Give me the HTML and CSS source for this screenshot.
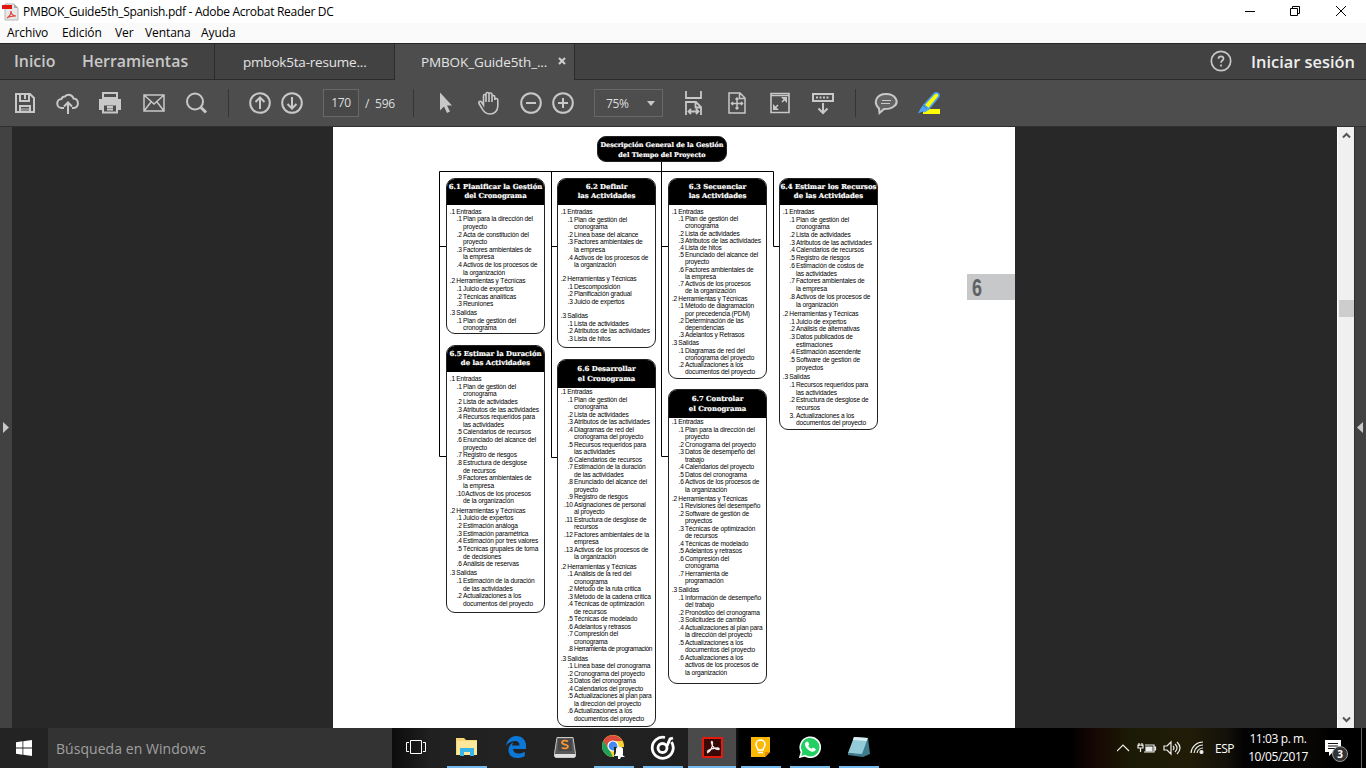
FILE: index.html
```html
<!DOCTYPE html>
<html lang="es">
<head>
<meta charset="utf-8">
<title>PMBOK_Guide5th_Spanish.pdf - Adobe Acrobat Reader DC</title>
<link rel="stylesheet" href="styles.css">
</head>
<body>
<div class="window">
<header class="titlebar">
  <svg class="appicon" width="17" height="18" viewBox="0 0 17 18"><path d="M3 1h9l4 4v12H3z" fill="#e8e8e8" stroke="#b5b5b5"/><path d="M12 1v4h4z" fill="#aaa"/><path d="M0 2h10v4H0z" fill="#e2180e"/><path d="M5 15c3-2 4-4 4-7 0 3 2 5 5 5-4 0-6 0-9 2z" fill="none" stroke="#e0443b" stroke-width="1.200"/></svg>
  <span class="wtitle">PMBOK_Guide5th_Spanish.pdf - Adobe Acrobat Reader DC</span>
  <svg class="wctl" width="110" height="22" viewBox="0 0 110 22" fill="none" stroke="#000"><path d="M0 10.500h10M45.500 7.500h7v7h-7zM47.500 7.500v-2h7v7h-2M91 5l10 10M101 5l-10 10"/></svg>
</header>
<nav class="menubar"><span class="m1">Archivo</span><span class="m2">Edición</span><span class="m3">Ver</span><span class="m4">Ventana</span><span class="m5">Ayuda</span></nav>
<div class="tabs">
  <div class="home"><span class="inicio">Inicio</span><span class="herr">Herramientas</span></div>
  <div class="tab t1"><span>pmbok5ta-resume...</span></div>
  <div class="tab t2"><span>PMBOK_Guide5th_...</span><svg width="8" height="8" viewBox="0 0 8 8" stroke="#d0d0d0" stroke-width="2"><path d="M1 1l6 6M7 1l-6 6"/></svg></div>
  <div class="account"><svg width="22" height="22" viewBox="0 0 22 22" fill="none" stroke="#c8c8c8" stroke-width="1.700"><circle cx="11" cy="11" r="9.700"/><path d="M8.500 8.800c0-3.200 5-3.200 5 0 0 1.700-2.500 1.800-2.500 4M11 14.500v2"/></svg><span>Iniciar sesión</span></div>
</div>
<div class="toolbar">
  <svg class="ic g13" viewBox="0 0 24 24"><path d="M3 3h14l4 4v14H3zM7 3v7h9V3M7 21v-6h10v6"/><path d="M12 4v4" /><path d="M8 17h8v3H8z" fill="#888" stroke="none"/></svg>
  <svg class="ic g19" viewBox="0 0 24 24"><path d="M8 17H6a4.500 4.500 0 0 1-.5-9A3.500 3.500 0 0 1 9 5.500a5 5 0 0 1 8.500 2A4.800 4.800 0 0 1 18 17h-2M12 23V12M8 15.500l4-4 4 4"/></svg>
  <svg class="ic g18" viewBox="0 0 24 24"><path d="M5 2h14v5H5z"/><path d="M1 8h22v11h-3v-5H4v5H1z" fill="#c8c8c8" stroke="none"/><path d="M5 13.500h14v8H5zM9 16h6M9 18.500h6"/></svg>
  <svg class="ic g20" viewBox="0 0 24 24"><path d="M2 4h20v16H2zM2 4l10 9L22 4M2 20l7-9M22 20l-7-9" stroke-width="1.500"/></svg>
  <svg class="ic g18" viewBox="0 0 24 24"><circle cx="11" cy="10.500" r="8"/><path d="M17 16.500l5 5" stroke-width="3"/></svg>
  <i class="sep g20"></i>
  <svg class="ic g19" viewBox="0 0 24 24"><circle cx="12" cy="12" r="9.800"/><path d="M12 18V7M7.500 11L12 6.500l4.500 4.500"/></svg>
  <svg class="ic g8" viewBox="0 0 24 24"><circle cx="12" cy="12" r="9.800"/><path d="M12 6v11M7.500 13l4.500 4.500 4.500-4.500"/></svg>
  <span class="pagebox g19">170</span><span class="total">/&nbsp; 596</span>
  <i class="sep"></i>
  <svg class="ic g20" viewBox="0 0 24 24"><path d="M6 1.500v18l4-4 3 6.500 3-1.500-3-6h5z" fill="#c8c8c8" stroke="none"/></svg>
  <svg class="ic g18" viewBox="0 0 24 24"><path d="M7.500 14V5c0-2 2.500-2 2.500 0v6V3c0-2 3-2 3 0v8V3.500c0-2 3-2 3 0V11 6c0-2 2.800-2 2.800 0v3c0-2 3-2 3 0v6c0 5-3.500 8-7.800 8-4.500 0-6.500-2.500-8-5.500l-3-5c-1-2 1.500-3 2.500-1.500z" stroke-width="1.600"/></svg>
  <svg class="ic g19" viewBox="0 0 24 24"><circle cx="12" cy="12" r="9.800"/><path d="M7 12h10"/></svg>
  <svg class="ic g8" viewBox="0 0 24 24"><circle cx="12" cy="12" r="9.800"/><path d="M7 12h10M12 7v10"/></svg>
  <span class="zoombox g19"><b>75%</b><svg width="8" height="5" viewBox="0 0 8 5"><path d="M0 0h8L4 5z" fill="#c8c8c8"/></svg></span>
  <svg class="ic g18" viewBox="0 0 24 24"><path d="M5 0v7h15V0M5 24V11h10l5 5v8M14.500 11v5.500H20M8 20.500h9M10 18l-2.500 2.500L10 23M15 18l2.500 2.500L15 23" stroke-width="1.800"/></svg>
  <svg class="ic g20" viewBox="0 0 24 24"><path d="M4 2h11l5 5v15H4zM14.500 2v5.500H20M12 7v11M6.500 12.500h11M10.500 8.500L12 7l1.500 1.500M10.500 16.500L12 18l1.500-1.500M8 11l-1.500 1.500L8 14M16 11l1.500 1.500L16 14" stroke-width="1.500"/></svg>
  <svg class="ic g19" viewBox="0 0 24 24"><path d="M3 2.500h18v19H3z" stroke-width="1.600"/><path d="M3 4.500h18M14 11l4-4M6 18l4-4" stroke-width="1.600"/><path d="M13 6h6v6zM5 13v6h6z" fill="#c8c8c8" stroke="none"/></svg>
  <svg class="ic g19" viewBox="0 0 24 24"><path d="M2 3h20v7H2zM12 12v10M7.500 17.500L12 22l4.500-4.500"/><path d="M5 6.500h14" stroke-dasharray="2 1.500"/></svg>
  <i class="sep g20"></i>
  <svg class="ic g18" viewBox="0 0 24 24"><path d="M5 17.500C-1 12 2 3 12 3s14 9 7 13c-3 2-6 2-9 2l-4.500 4z" fill="#646464"/><path d="M8 9.500h9M7 12.500h9" stroke-width="1.200"/></svg>
  <svg class="ic g18" viewBox="0 0 24 24"><path d="M7 18h17v5H7z" fill="#ff0" stroke="none"/><path d="M8 14L18 3c2-2 5-1 5 1 0 1-.5 2-1 2.500L12.500 18z" fill="#ff0" stroke="#4ba3f2" stroke-width="1.800"/><path d="M6.500 14.500l6 4.500-4 2.500-2-1-4.500 2 2-4z" fill="#4ba3f2" stroke="none"/></svg>
</div>
<main class="viewer">
  <aside class="rail left"><svg width="6" height="11" viewBox="0 0 6 11"><path d="M0 0l6 5.500L0 11z" fill="#c8c8c8"/></svg></aside>
  <section class="desk"><div class="page">
    <svg class="wires" width="682" height="601" viewBox="0 0 682 601" fill="none" stroke="#000"><path d="M328.500 34v295.500H336M106.500 329.500h8M106.500 329.500V44.500h334v75h6M106.500 119.500h8M218.500 44v286.500h7M218.500 119.500h7M328.500 119.500h8"/></svg>
    <h1 class="node root">Descripción General de la Gestión<br>del Tiempo del Proyecto</h1>

    <article class="node n1"><h2>6.1 Planificar la Gestión<br>del Cronograma</h2>
      <h3><b>.1</b>Entradas</h3>
      <p><b>.1</b>Plan para la dirección del<br>proyecto</p><p><b>.2</b>Acta de constitución del<br>proyecto</p><p><b>.3</b>Factores ambientales de<br>la empresa</p><p><b>.4</b>Activos de los procesos de<br>la organización</p>
      <h3><b>.2</b>Herramientas y Técnicas</h3>
      <p><b>.1</b>Juicio de expertos</p><p><b>.2</b>Técnicas analíticas</p><p><b>.3</b>Reuniones</p>
      <h3><b>.3</b>Salidas</h3>
      <p><b>.1</b>Plan de gestión del<br>cronograma</p></article>

    <article class="node n2"><h2>6.2 Definir<br>las Actividades</h2>
      <h3><b>.1</b>Entradas</h3>
      <p><b>.1</b>Plan de gestión del<br>cronograma</p><p><b>.2</b>Línea base del alcance</p><p><b>.3</b>Factores ambientales de<br>la empresa</p><p><b>.4</b>Activos de los procesos de<br>la organización</p>
      <h3><b>.2</b>Herramientas y Técnicas</h3>
      <p><b>.1</b>Descomposición</p><p><b>.2</b>Planificación gradual</p><p><b>.3</b>Juicio de expertos</p>
      <h3><b>.3</b>Salidas</h3>
      <p><b>.1</b>Lista de actividades</p><p><b>.2</b>Atributos de las actividades</p><p><b>.3</b>Lista de hitos</p></article>

    <article class="node n3"><h2>6.3 Secuenciar<br>las Actividades</h2>
      <h3><b>.1</b>Entradas</h3>
      <p><b>.1</b>Plan de gestión del<br>cronograma</p><p><b>.2</b>Lista de actividades</p><p><b>.3</b>Atributos de las actividades</p><p><b>.4</b>Lista de hitos</p><p><b>.5</b>Enunciado del alcance del<br>proyecto</p><p><b>.6</b>Factores ambientales de<br>la empresa</p><p><b>.7</b>Activos de los procesos<br>de la organización</p>
      <h3><b>.2</b>Herramientas y Técnicas</h3>
      <p><b>.1</b>Método de diagramación<br>por precedencia (PDM)</p><p><b>.2</b>Determinación de las<br>dependencias</p><p><b>.3</b>Adelantos y Retrasos</p>
      <h3><b>.3</b>Salidas</h3>
      <p><b>.1</b>Diagramas de red del<br>cronograma del proyecto</p><p><b>.2</b>Actualizaciones a los<br>documentos del proyecto</p></article>

    <article class="node n4"><h2>6.4 Estimar los Recursos<br>de las Actividades</h2>
      <h3><b>.1</b>Entradas</h3>
      <p><b>.1</b>Plan de gestión del<br>cronograma</p><p><b>.2</b>Lista de actividades</p><p><b>.3</b>Atributos de las actividades</p><p><b>.4</b>Calendarios de recursos</p><p><b>.5</b>Registro de riesgos</p><p><b>.6</b>Estimación de costos de<br>las actividades</p><p><b>.7</b>Factores ambientales de<br>la empresa</p><p><b>.8</b>Activos de los procesos de<br>la organización</p>
      <h3><b>.2</b>Herramientas y Técnicas</h3>
      <p><b>.1</b>Juicio de expertos</p><p><b>.2</b>Análisis de alternativas</p><p><b>.3</b>Datos publicados de<br>estimaciones</p><p><b>.4</b>Estimación ascendente</p><p><b>.5</b>Software de gestión de<br>proyectos</p>
      <h3><b>.3</b>Salidas</h3>
      <p><b>.1</b>Recursos requeridos para<br>las actividades</p><p><b>.2</b>Estructura de desglose de<br>recursos</p><p><b>3.</b>Actualizaciones a los<br>documentos del proyecto</p></article>

    <article class="node n5"><h2>6.5 Estimar la Duración<br>de las Actividades</h2>
      <h3><b>.1</b>Entradas</h3>
      <p><b>.1</b>Plan de gestión del<br>cronograma</p><p><b>.2</b>Lista de actividades</p><p><b>.3</b>Atributos de las actividades</p><p><b>.4</b>Recursos requeridos para<br>las actividades</p><p><b>.5</b>Calendarios de recursos</p><p><b>.6</b>Enunciado del alcance del<br>proyecto</p><p><b>.7</b>Registro de riesgos</p><p><b>.8</b>Estructura de desglose<br>de recursos</p><p><b>.9</b>Factores ambientales de<br>la empresa</p><p><b class="wide">.10</b>Activos de los procesos<br>de la organización</p>
      <h3><b>.2</b>Herramientas y Técnicas</h3>
      <p><b>.1</b>Juicio de expertos</p><p><b>.2</b>Estimación análoga</p><p><b>.3</b>Estimación paramétrica</p><p><b>.4</b>Estimación por tres valores</p><p><b>.5</b>Técnicas grupales de toma<br>de decisiones</p><p><b>.6</b>Análisis de reservas</p>
      <h3><b>.3</b>Salidas</h3>
      <p><b>.1</b>Estimación de la duración<br>de las actividades</p><p><b>.2</b>Actualizaciones a los<br>documentos del proyecto</p></article>

    <article class="node n6"><h2>6.6 Desarrollar<br>el Cronograma</h2>
      <h3><b>.1</b>Entradas</h3>
      <p><b>.1</b>Plan de gestión del<br>cronograma</p><p><b>.2</b>Lista de actividades</p><p><b>.3</b>Atributos de las actividades</p><p><b>.4</b>Diagramas de red del<br>cronograma del proyecto</p><p><b>.5</b>Recursos requeridos para<br>las actividades</p><p><b>.6</b>Calendarios de recursos</p><p><b>.7</b>Estimación de la duración<br>de las actividades</p><p><b>.8</b>Enunciado del alcance del<br>proyecto</p><p><b>.9</b>Registro de riesgos</p><p><b>.10</b>Asignaciones de personal<br>al proyecto</p><p><b>.11</b>Estructura de desglose de<br>recursos</p><p><b>.12</b>Factores ambientales de la<br>empresa</p><p><b>.13</b>Activos de los procesos de<br>la organización</p>
      <h3><b>.2</b>Herramientas y Técnicas</h3>
      <p><b>.1</b>Análisis de la red del<br>cronograma</p><p><b>.2</b>Método de la ruta crítica</p><p><b>.3</b>Método de la cadena crítica</p><p><b>.4</b>Técnicas de optimización<br>de recursos</p><p><b>.5</b>Técnicas de modelado</p><p><b>.6</b>Adelantos y retrasos</p><p><b>.7</b>Compresión del<br>cronograma</p><p class="tight"><b>.8</b>Herramienta de programación</p>
      <h3><b>.3</b>Salidas</h3>
      <p><b>.1</b>Línea base del cronograma</p><p><b>.2</b>Cronograma del proyecto</p><p><b>.3</b>Datos del cronograma</p><p><b>.4</b>Calendarios del proyecto</p><p><b>.5</b>Actualizaciones al plan para<br>la dirección del proyecto</p><p><b>.6</b>Actualizaciones a los<br>documentos del proyecto</p></article>

    <article class="node n7"><h2>6.7 Controlar<br>el Cronograma</h2>
      <h3><b>.1</b>Entradas</h3>
      <p><b>.1</b>Plan para la dirección del<br>proyecto</p><p><b>.2</b>Cronograma del proyecto</p><p><b>.3</b>Datos de desempeño del<br>trabajo</p><p><b>.4</b>Calendarios del proyecto</p><p><b>.5</b>Datos del cronograma</p><p><b>.6</b>Activos de los procesos de<br>la organización</p>
      <h3><b>.2</b>Herramientas y Técnicas</h3>
      <p><b>.1</b>Revisiones del desempeño</p><p><b>.2</b>Software de gestión de<br>proyectos</p><p><b>.3</b>Técnicas de optimización<br>de recursos</p><p><b>.4</b>Técnicas de modelado</p><p><b>.5</b>Adelantos y retrasos</p><p><b>.6</b>Compresión del<br>cronograma</p><p><b>.7</b>Herramienta de<br>programación</p>
      <h3><b>.3</b>Salidas</h3>
      <p><b>.1</b>Información de desempeño<br>del trabajo</p><p><b>.2</b>Pronóstico del cronograma</p><p><b>.3</b>Solicitudes de cambio</p><p><b>.4</b>Actualizaciones al plan para<br>la dirección del proyecto</p><p><b>.5</b>Actualizaciones a los<br>documentos del proyecto</p><p><b>.6</b>Actualizaciones a los<br>activos de los procesos de<br>la organización</p></article>
    <div class="chapter"><span>6</span></div>
  </div></section>
  <div class="scroll"><svg width="9" height="7" viewBox="0 0 9 7"><path d="M1 5.500L4.500 2 8 5.500" fill="none" stroke="#555" stroke-width="2"/></svg><i class="thumb"></i><svg class="down" width="9" height="7" viewBox="0 0 9 7"><path d="M1 1.500L4.500 5 8 1.500" fill="none" stroke="#555" stroke-width="2"/></svg></div>
  <aside class="rail right"><svg width="6" height="11" viewBox="0 0 6 11"><path d="M6 0L0 5.500 6 11z" fill="#c8c8c8"/></svg></aside>
</main>
</div>
<footer class="taskbar">
  <div class="start"><svg width="16" height="16" viewBox="0 0 16 16" fill="#fff"><path d="M0 2.300l6.500-1V7.600H0zM7.300 1.200L16 0v7.600H7.300zM0 8.400h6.500v6.300L0 13.800zM7.300 8.400H16V16l-8.700-1.200z"/></svg></div>
  <div class="search"><span>Búsqueda en Windows</span></div>
  <div class="slot tv"><svg width="20" height="14" viewBox="0 0 20 14" fill="none" stroke="#fff"><path d="M4.500.5h11v13h-11zM3 2.500H.5v9H3M17 2.500h2.500v9H17"/></svg></div>
  <div class="slot run stack"><svg width="22" height="20" viewBox="0 0 22 20"><path d="M0 1h8l2 2h11v15H0z" fill="#f7d674"/><path d="M1 4h20v14H1z" fill="#fde79d"/><path d="M4 19v-8h14v8h-4v-4H8v4z" fill="#38b4e8"/></svg></div>
  <div class="slot"><svg width="20" height="22" viewBox="0 0 20 22"><path d="M0 10C1 4 5 0 10.500 0 16 0 20 4 20 9.500V13H7c.3 3 2.500 4.500 5.500 4.500 2.300 0 4.500-.6 6.300-1.800v4.200C16.500 21.300 14 22 11 22c-5 0-8.500-3-8.500-8 0-3.500 2-6.500 5-7.500-.8.800-1.300 2-1.400 3h7.400c0-3-1.500-4.500-4.200-4.500C5.500 5 2 7 0 10z" fill="#0b78d7"/></svg></div>
  <div class="slot"><svg width="22" height="21" viewBox="0 0 22 21"><path d="M3 .5h16l2.500 16v3l-1 1h-19l-1-1v-3z" fill="#5a5a5a" stroke="#c9c9c9"/><path d="M4 2h14v12H4z" fill="#484848"/><path d="M1 17h20v3H1z" fill="#e0e0e0"/><path d="M14 4.500C12 3 8 3.200 8 5.500c0 2.600 6 1.500 6 4 0 2-3.500 2.500-6.300 1.200" fill="none" stroke="#f79533" stroke-width="1.800"/></svg></div>
  <div class="slot run"><svg width="24" height="26" viewBox="0 0 24 26"><circle cx="11" cy="12" r="11" fill="#f9d334"/><path d="M1.500 6.500L7 15l4 8A11 11 0 0 1 1.500 6.500z" fill="#1fa05b"/><path d="M20.500 7A11 11 0 0 0 1.500 6.500L6 14l5-7z" fill="#dd4b3e"/><circle cx="11" cy="12" r="5" fill="#4688f1" stroke="#fff" stroke-width="1.200"/><path d="M12 13h11v12H12z" fill="#1c2628"/><path d="M14 15c0-3 7-3 7 0v4c0 2-1 2 2 4H19l-1 2h-2v-3h-4c2-2 2-3 2-7z" fill="#fff"/></svg></div>
  <div class="slot run"><svg width="25" height="25" viewBox="0 0 25 25" fill="none" stroke="#fff" stroke-width="2.800"><path d="M15 2.500A10.500 10.500 0 1 0 21.500 7"/><circle cx="12.500" cy="13" r="4.500"/><path d="M17 11l3-7 3-1"/></svg></div>
  <div class="slot run active"><svg width="21" height="21" viewBox="0 0 21 21"><path d="M1 1h19v19H1z" fill="#3a0805" stroke="#e31b0c" stroke-width="2"/><path d="M5 16c3-1 6-6 5.500-10 0-2-1.500-2-1 0 .5 4 4 6.500 7 6.500 1 0 1-1.500-1-1.500-4 0-8 1.500-10.500 3.500" fill="none" stroke="#eee" stroke-width="1.300"/></svg></div>
  <div class="slot run"><svg width="19" height="20" viewBox="0 0 19 20"><path d="M0 0h19v15l-5 5H0z" fill="#fbb904"/><path d="M14 20v-5h5z" fill="#e58b00"/><path d="M7 13c0-2-2-3-2-5.500a4.500 4.500 0 0 1 9 0C14 10 12 11 12 13zM7 15.500h5" fill="none" stroke="#fff" stroke-width="1.500"/></svg></div>
  <div class="slot run"><svg width="22" height="22" viewBox="0 0 22 22"><path d="M1 21l1.500-5A10 10 0 1 1 6 19.700z" fill="#22cf62" stroke="#fff" stroke-width="1.600"/><path d="M7 6l2-.5 1.200 3-1 1.300c.8 1.500 2 2.500 3.500 3l1.200-1.300 2.800 1.500c.2 2-2 3.200-4 2.700C9 14.500 6.500 11.500 6 9c-.2-1 .2-2.300 1-3z" fill="#fff"/></svg></div>
  <div class="slot run"><svg width="23" height="20" viewBox="0 0 23 20"><path d="M7 0l14 1-5 17-15-2z" fill="#93cbd9"/><path d="M7 0l14 1-1 3L6 3z" fill="#d9eef3"/><path d="M21 1l2 16-7 3-15-2v-2l14 1z" fill="#3f7b8d"/></svg></div>
  <div class="tray">
    <svg width="90" height="16" viewBox="0 0 90 16" fill="none" stroke="#eee" stroke-width="1.200"><path d="M0 11l6-6 6 6"/><path d="M28 5h9v7h-10M37 7h1.500v3H37M22 3v3M25 3v3M21 5h5v3h-5zM23.500 8v4"/><path d="M29 7h6v4h-6z" fill="#eee"/><path d="M47 6h3l4-4v12l-4-4h-3zM56 6q2 2 0 4M58 4q4 4 0 8M60 2q6 6 0 12"/><path d="M74 13A12 12 0 0 1 86 2M77 13a9 9 0 0 1 9-8M80 13a6 6 0 0 1 6-5"/><circle cx="84.500" cy="12" r="1.500" fill="#eee"/></svg>
    <span class="lang">ESP</span>
    <div class="clock"><span class="time">11:03 p. m.</span><span class="date">10/05/2017</span></div>
    <div class="notif"><svg width="16" height="17" viewBox="0 0 16 17"><path d="M0 0h16v12H8l-4 4v-4H0z" fill="#fff"/><path d="M3 3.500h10M3 6h10M3 8.500h7" stroke="#111"/></svg><span class="badge">3</span></div>
    <i class="edge"></i>
  </div>
</footer>
</body>
</html>
```
FILE: styles.css
```css
* { box-sizing: border-box; }
body { margin: 0; width: 1366px; height: 768px; overflow: hidden; display: flex; flex-direction: column; font-family: "Open Sans", "Noto Sans", sans-serif; font-size: 12px; }
svg { display: block; flex: none; }
span { white-space: nowrap; }
.window { height: 728px; display: flex; flex-direction: column; }

.titlebar { height: 23px; background: #fff; display: flex; align-items: center; padding-left: 2px; }
.wtitle { margin-left: 4px; font-size: 12px; letter-spacing: -.3px; }
.wctl { margin-left: auto; margin-right: 11px; }
.menubar { height: 20px; background: #fafafa; display: flex; align-items: center; padding: 0 0 1px 7px; letter-spacing: -.1px; }
.m1 { width: 55px; } .m2 { width: 53px; } .m3 { width: 30px; } .m4 { width: 56px; }

.tabs { height: 37px; background: #424242; border-top: 1px solid #252525; border-bottom: 1px solid #2b2b2b; display: flex; }
.home { width: 215px; border-right: 1px solid #2b2b2b; display: flex; align-items: center; padding: 0 0 1px 14px; font-size: 15.900px; font-weight: 600; color: #c8c8c8; }
.inicio { width: 68px; }
.tab { width: 180px; display: flex; align-items: center; color: #e4e4e4; font-size: 13.500px; letter-spacing: -.2px; border-right: 1px solid #2b2b2b; }
.t1 { padding-left: 28px; }
.t2 { padding-left: 26px; background: #4d4d4d; height: 36px; gap: 11px; letter-spacing: -.12px; }
.t2 svg { margin-bottom: 2px; }
.account { margin-left: auto; margin-right: 11px; padding-bottom: 1px; display: flex; align-items: center; gap: 19px; color: #eee; font-size: 16.400px; font-weight: 600; }

.toolbar { height: 47px; background: #4d4d4d; border-bottom: 1px solid #303030; display: flex; align-items: center; color: #ddd; }
.ic { width: 24px; height: 24px; fill: none; stroke: #c8c8c8; stroke-width: 2; }
.sep { width: 1px; height: 28px; background: #353535; flex: none; }
.g8 { margin-left: 8px; } .g13 { margin-left: 13px; } .g18 { margin-left: 18px; } .g19 { margin-left: 19px; } .g20 { margin-left: 20px; }
.pagebox { width: 36px; height: 28px; border: 1px solid #686868; text-align: center; line-height: 26px; background: #484848; letter-spacing: -.3px; }
.total { width: 54px; padding-left: 6px; letter-spacing: -.2px; }
.zoombox { width: 69px; height: 28px; border: 1px solid #686868; display: flex; align-items: center; padding: 0 7px 0 11px; justify-content: space-between; letter-spacing: -.3px; }
.zoombox b { font-weight: 400; }

.viewer { height: 601px; display: flex; background: #282828; }
.rail { width: 12px; background: #424242; display: flex; align-items: center; flex: none; }
.left { padding-left: 3px; }
.right { border-left: 1px solid #303030; padding-left: 2px; }
.desk { flex: 1; padding-left: 321px; }
.scroll { width: 17px; background: #f0f0f0; border-left: 1px solid #fff; display: flex; flex-direction: column; align-items: center; padding: 5px 0; }
.thumb { width: 15px; height: 17px; background: #cdcdcd; margin-top: 161px; }
.down { margin-top: auto; }
.page { position: relative; width: 682px; height: 601px; background: #fff; overflow: hidden; }
.wires { position: absolute; left: 0; top: 0; }
.chapter { position: absolute; left: 634px; top: 147px; width: 48px; height: 26px; background: #c7c8ca; padding-left: 5px; }
.chapter span { display: block; width: 14px; font: 700 23px/29px "Liberation Sans", sans-serif; color: #606164; transform: scaleX(.78); transform-origin: left; }

/* process boxes */
.node { position: absolute; width: 99px; border: 1px solid #222; border-radius: 9px; background: #fff; overflow: hidden; font: 6.600px "Liberation Sans", sans-serif; line-height: var(--lh); letter-spacing: -.16px; color: #000; white-space: nowrap; }
.node h2, .node h3, .node p { margin: 0; font-size: inherit; }
.node h2, .root { font: 700 6.900px/9px "DejaVu Serif", serif; letter-spacing: 0; color: #fff; background: #000; text-align: center; margin: 0; -webkit-text-stroke: .2px #fff; }
.node h2 { height: 26px; padding-top: 4px; margin: 0 -3px 2.900px; }
.node h3 { font-weight: 400; padding-left: 9.300px; margin-top: var(--gap); }
.node h2 + h3 { margin-top: 0; }
.node p { padding-left: 16px; }
.node b { display: inline-block; width: 12px; margin-left: -12px; padding-right: 1.300px; font-weight: 400; text-align: right; }
.node .wide { width: auto; margin-left: -7px; padding-right: .500px; }
.node .tight { letter-spacing: -.35px; }
.root { left: 264px; top: 9px; width: 130px; height: 26px; font-size: 6.450px; line-height: 10px; padding-top: 3px; background: #000; }
.n1 { left: 113px; top: 51px; height: 156px; --lh: 7.580px; --gap: 1.400px; }
.n2 { left: 224px; top: 51px; height: 170px; --lh: 7.620px; --gap: 6.300px; }
.n3 { left: 335px; top: 51px; height: 201px; --lh: 7.200px; --gap: .900px; }
.n4 { left: 446px; top: 51px; height: 252px; --lh: 7.720px; --gap: 1.600px; }
.n5 { left: 113px; top: 218px; height: 268px; --lh: 7.660px; --gap: 1.600px; }
.n6 { left: 224px; top: 232px; height: 368px; --lh: 7.510px; --gap: 1.800px; }
.n7 { left: 335px; top: 262px; height: 295px; --lh: 7.530px; --gap: 1.200px; }
.n6 h2, .n7 h2 { height: 28px; line-height: 10px; margin-bottom: 0; }

/* taskbar */
.taskbar { height: 40px; display: flex; background: linear-gradient(90deg, #0c0c0c 392px, #202020 430px, #232323 600px, #1c1c1c 735px, #000 740px, #000 1070px, #170704 1095px, #1b1a04 1130px, #201c07 1190px, #14120a 1225px, #020202 1245px, #090706 1310px, #000 1330px); }
.start { width: 48px; background: #232323; display: grid; place-items: center; }
.search { width: 344px; background: #333; color: #a0a0a0; font-size: 14px; padding-left: 8px; line-height: 41px; letter-spacing: .05px; }
.slot { width: 49px; display: grid; place-items: center; border-bottom: 2px solid transparent; position: relative; }
.tv { width: 50px; padding-right: 2px; }
.run::after { content: ""; position: absolute; left: 5px; right: 4px; bottom: -2px; height: 2px; background: #76b9ed; }
.active { background: #4a4a4a; width: 48px; margin-left: 1px; }
.active::after { left: 0; right: 0; }
.tray { margin-left: auto; width: 249px; display: flex; align-items: center; color: #fff; }
.lang { margin-left: 8px; width: 34px; font-size: 12px; letter-spacing: -.5px; }
.clock { width: 58px; display: flex; flex-direction: column; align-items: center; line-height: 18px; font-size: 12px; letter-spacing: -.4px; }
.notif { position: relative; margin-left: 18px; width: 26px; }
.badge { position: absolute; left: 7px; top: 6px; width: 16px; height: 16px; border-radius: 8px; background: #333; border: 1px solid #999; font: 700 10px/14px "Open Sans", sans-serif; text-align: center; }
.edge { width: 1px; height: 40px; background: #666; margin-left: 10px; }
```
